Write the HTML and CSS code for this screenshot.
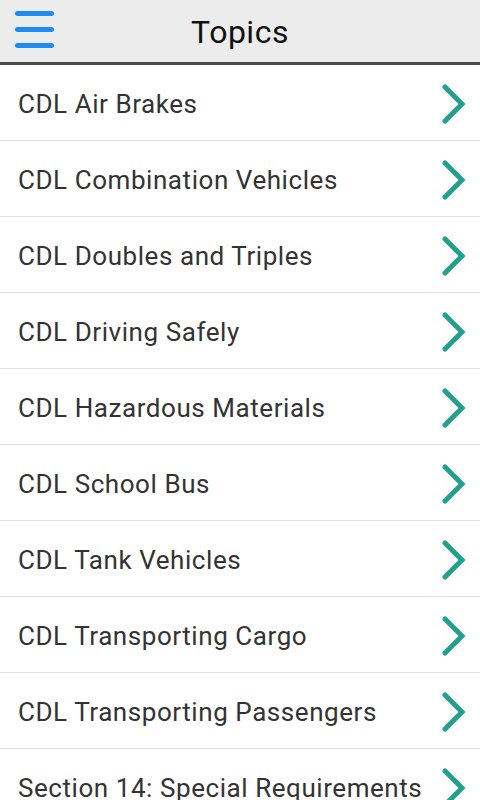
FILE: index.html
```html
<!DOCTYPE html>
<html lang="en">
<head>
    <meta charset="UTF-8">
    <meta name="viewport" content="width=device-width, initial-scale=1.0">
    <title>Topics</title>
    <link rel="stylesheet" href="styles.css">
</head>
<body>
    <header class="topbar">
        <button class="menu-btn" aria-label="Menu">
            <span></span><span></span><span></span>
        </button>
        <h1>Topics</h1>
    </header>

    <ul class="topics">
        <li><span>CDL Air Brakes</span><svg viewBox="0 0 24 40"><path d="M3 3 L20 20 L3 37"/></svg></li>
        <li><span>CDL Combination Vehicles</span><svg viewBox="0 0 24 40"><path d="M3 3 L20 20 L3 37"/></svg></li>
        <li><span>CDL Doubles and Triples</span><svg viewBox="0 0 24 40"><path d="M3 3 L20 20 L3 37"/></svg></li>
        <li><span>CDL Driving Safely</span><svg viewBox="0 0 24 40"><path d="M3 3 L20 20 L3 37"/></svg></li>
        <li><span>CDL Hazardous Materials</span><svg viewBox="0 0 24 40"><path d="M3 3 L20 20 L3 37"/></svg></li>
        <li><span>CDL School Bus</span><svg viewBox="0 0 24 40"><path d="M3 3 L20 20 L3 37"/></svg></li>
        <li><span>CDL Tank Vehicles</span><svg viewBox="0 0 24 40"><path d="M3 3 L20 20 L3 37"/></svg></li>
        <li><span>CDL Transporting Cargo</span><svg viewBox="0 0 24 40"><path d="M3 3 L20 20 L3 37"/></svg></li>
        <li><span>CDL Transporting Passengers</span><svg viewBox="0 0 24 40"><path d="M3 3 L20 20 L3 37"/></svg></li>
        <li><span>Section 14: Special Requirements</span><svg viewBox="0 0 24 40"><path d="M3 3 L20 20 L3 37"/></svg></li>
    </ul>
</body>
</html>
```

FILE: styles.css
```css
body {
    margin: 0;
    font-family: Roboto, "Liberation Sans", sans-serif;
    background: #fff;
    overflow: hidden;
}
.topbar {
    display: flex;
    align-items: center;
    justify-content: center;
    position: relative;
    height: 60px;
    padding-top: 2px;
    background: #ececec;
    border-bottom: 3px solid #4a4a4a;
}
.topbar h1 {
    margin: 0;
    font-size: 32px;
    font-weight: normal;
    letter-spacing: 0.5px;
    color: #111;
}
.menu-btn {
    position: absolute;
    left: 15px;
    top: 11px;
    width: 39px;
    padding: 0;
    border: none;
    background: none;
    display: flex;
    flex-direction: column;
    gap: 11px;
}
.menu-btn span {
    height: 5px;
    border-radius: 3px;
    background: #1e8cf0;
}
.topics {
    list-style: none;
    margin: 0;
    padding: 0;
}
.topics li {
    display: flex;
    align-items: center;
    justify-content: space-between;
    height: 73px;
    padding: 2px 14px 0 18px;
    border-bottom: 1px solid #e2e2e2;
}
.topics li span {
    font-size: 26px;
    letter-spacing: 0.56px;
    color: #333;
    white-space: nowrap;
}
.topics svg {
    width: 24px;
    height: 40px;
    flex: none;
}
.topics path {
    fill: none;
    stroke: #21a18b;
    stroke-width: 5;
    stroke-linecap: round;
}
```
